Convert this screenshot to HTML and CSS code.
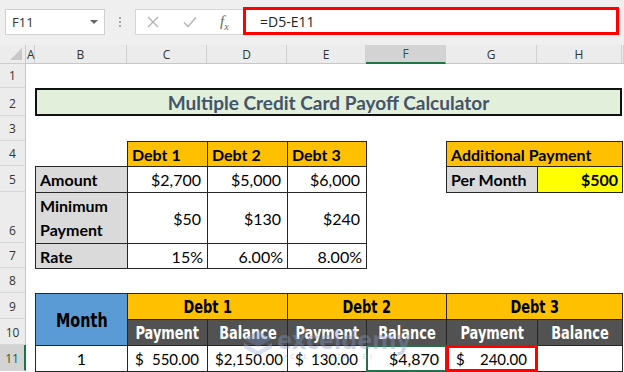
FILE: index.html
```html
<!DOCTYPE html>
<html lang="en">
<head>
    <meta charset="UTF-8">
    <title>Multiple Credit Card Payoff Calculator</title>
    <link rel="stylesheet" href="styles.css">
</head>
<body>
    <div class="toolbar">
        <div class="namebox">
            <span>F11</span>
            <span class="caret"></span>
        </div>
        <div class="grip"><i></i><i></i><i></i></div>
        <div class="formula-bar">
            <div class="fb-icons">
                <svg width="14" height="14" viewBox="0 0 14 14"><path d="M2 2 L12 12 M12 2 L2 12" stroke="#b3b3b3" stroke-width="1.4" fill="none"/></svg>
                <svg width="16" height="14" viewBox="0 0 16 14"><path d="M2 7.5 L6 11.5 L14 2.5" stroke="#b3b3b3" stroke-width="1.4" fill="none"/></svg>
                <span class="fx">f<sub>x</sub></span>
            </div>
            <div class="formula">=D5-E11</div>
        </div>
    </div>

    <div class="sheet">
        <!-- column headers -->
        <div class="corner r0 cR"><span></span></div>
        <div class="ch r0 cA">A</div>
        <div class="ch r0 cB">B</div>
        <div class="ch r0 cC">C</div>
        <div class="ch r0 cD">D</div>
        <div class="ch r0 cE">E</div>
        <div class="ch r0 cF active">F</div>
        <div class="ch r0 cG">G</div>
        <div class="ch r0 cH">H</div>
        <div class="ch r0 cX"></div>

        <!-- row headers -->
        <div class="rh r1 cR">1</div>
        <div class="rh r2 cR">2</div>
        <div class="rh r3 cR">3</div>
        <div class="rh r4 cR">4</div>
        <div class="rh r5 cR">5</div>
        <div class="rh r6 cR">6</div>
        <div class="rh r7 cR">7</div>
        <div class="rh r8 cR">8</div>
        <div class="rh r9 cR">9</div>
        <div class="rh r10 cR">10</div>
        <div class="rh r11 cR active">11</div>

        <!-- title -->
        <div class="title r2">Multiple Credit Card Payoff Calculator</div>

        <!-- debts -->
        <div class="c b orange bold r4 cC">Debt 1</div>
        <div class="c b orange bold r4 cD">Debt 2</div>
        <div class="c b orange bold r4 cE">Debt 3</div>

        <div class="c b grey bold r5 cB">Amount</div>
        <div class="c b num cur r5 cC">$2,700</div>
        <div class="c b num cur r5 cD">$5,000</div>
        <div class="c b num cur r5 cE">$6,000</div>

        <div class="c b grey bold wrap r6 cB">Minimum Payment</div>
        <div class="c b num cur r6 cC">$50</div>
        <div class="c b num cur r6 cD">$130</div>
        <div class="c b num cur r6 cE">$240</div>

        <div class="c b grey bold r7 cB">Rate</div>
        <div class="c b num r7 cC">15%</div>
        <div class="c b num r7 cD">6.00%</div>
        <div class="c b num r7 cE">8.00%</div>

        <!-- additional payment -->
        <div class="c b orange bold r4 cG span2">Additional Payment</div>
        <div class="c b grey bold r5 cG">Per Month</div>
        <div class="c b yellow bold num r5 cH">$500</div>

        <!-- schedule -->
        <div class="c b blue cond month cB"><span>Month</span></div>
        <div class="c b orange cond center r9 cC span2"><span>Debt 1</span></div>
        <div class="c b orange cond center r9 cE span2"><span>Debt 2</span></div>
        <div class="c b orange cond center r9 cG span2"><span>Debt 3</span></div>

        <div class="c b dark cond center r10 cC"><span>Payment</span></div>
        <div class="c b dark cond center r10 cD"><span>Balance</span></div>
        <div class="c b dark cond center r10 cE"><span>Payment</span></div>
        <div class="c b dark cond center r10 cF"><span>Balance</span></div>
        <div class="c b dark cond center r10 cG"><span>Payment</span></div>
        <div class="c b dark cond center r10 cH"><span>Balance</span></div>

        <div class="c b center r11 cB">1</div>
        <div class="c b acc r11 cC"><span>$</span><span>550.00</span></div>
        <div class="c b acc r11 cD"><span>$</span><span>2,150.00</span></div>
        <div class="c b acc r11 cE"><span>$</span><span>130.00</span></div>
        <div class="c b num cur selected r11 cF">$4,870</div>
        <div class="c b acc marked r11 cG"><span>$</span><span>240.00</span></div>
        <div class="c b r11 cH"></div>

        <div class="watermark">
            <svg width="30" height="28" viewBox="0 0 30 28"><path d="M15 1 L29 9 L15 17 L1 9 Z" fill="#6f86b8"/><path d="M1 13 L15 21 L29 13 L29 18 L15 26 L1 18 Z" fill="#9fb0d4"/></svg>
            <div class="wm-text">
                <span class="wm-name">exceldemy</span>
                <span class="wm-sub">EXCEL · DATA · BI</span>
            </div>
        </div>
    </div>
</body>
</html>
```

FILE: styles.css
```css
* {
    box-sizing: border-box;
}
body {
    margin: 0;
    width: 624px;
    height: 372px;
    overflow: hidden;
    background-color: #fff;
    font-family: Lato, "Open Sans", sans-serif;
    color: #000;
}

/* formula toolbar */
.toolbar {
    height: 45px;
    background-color: #efefef;
    display: flex;
    align-items: flex-start;
    padding: 9px 4px 0 5px;
    font-family: "Open Sans", sans-serif;
}
.namebox {
    width: 100px;
    height: 26px;
    background-color: #fff;
    border: 1px solid #cfcfcf;
    display: flex;
    align-items: center;
    justify-content: space-between;
    padding: 0 6px 0 6px;
    font-size: 13px;
    color: #333;
}
.caret {
    width: 0;
    height: 0;
    border-left: 4px solid transparent;
    border-right: 4px solid transparent;
    border-top: 4px solid #666;
}
.grip {
    width: 30px;
    height: 26px;
    display: flex;
    flex-direction: column;
    align-items: center;
    justify-content: center;
    gap: 2px;
}
.grip i {
    width: 2px;
    height: 2px;
    background-color: #a8a8a8;
}
.formula-bar {
    flex: 1;
    height: 26px;
    background-color: #fff;
    border: 1px solid #d6d6d6;
    display: flex;
}
.fb-icons {
    width: 107px;
    display: flex;
    align-items: center;
    gap: 22px;
    padding-left: 10px;
}
.fx {
    font-family: "Liberation Serif", serif;
    font-style: italic;
    font-size: 15px;
    color: #666;
}
.fx sub {
    font-size: 10px;
}
.formula {
    flex: 1;
    margin: -3px 0 -1px 0;
    border: 3px solid #f00;
    display: flex;
    align-items: center;
    padding-left: 14px;
    font-size: 14px;
    color: #222;
}

/* worksheet grid */
.sheet {
    position: relative;
    display: grid;
    grid-template-columns: 26px 9px 92px 80px 80px 79px 80px 91px 85px 2px;
    grid-template-rows: 19px 24px 28px 25px 25px 26px 51px 25px 25px 26px 26px 26px;
}
.r0 { grid-row: 1; }
.r1 { grid-row: 2; }
.r2 { grid-row: 3; }
.r3 { grid-row: 4; }
.r4 { grid-row: 5; }
.r5 { grid-row: 6; }
.r6 { grid-row: 7; }
.r7 { grid-row: 8; }
.r8 { grid-row: 9; }
.r9 { grid-row: 10; }
.r10 { grid-row: 11; }
.r11 { grid-row: 12; }
.cR { grid-column: 1; }
.cA { grid-column: 2; }
.cB { grid-column: 3; }
.cC { grid-column: 4; }
.cD { grid-column: 5; }
.cE { grid-column: 6; }
.cF { grid-column: 7; }
.cG { grid-column: 8; }
.cH { grid-column: 9; }
.cX { grid-column: 10; }
.span2 { grid-column-end: span 2; }

.corner {
    background-color: #ececec;
    border-right: 1px solid #cdcdcd;
    border-bottom: 1px solid #cdcdcd;
    position: relative;
}
.corner span {
    position: absolute;
    right: 3px;
    bottom: 3px;
    width: 0;
    height: 0;
    border-left: 12px solid transparent;
    border-bottom: 12px solid #c8c8c8;
}
.ch {
    background-color: #ececec;
    border-right: 1px solid #d0d0d0;
    border-bottom: 1px solid #c6c6c6;
    display: flex;
    align-items: center;
    justify-content: center;
    font-family: "Open Sans", sans-serif;
    font-size: 12px;
    color: #333;
}
.ch.cA {
    justify-content: flex-start;
    padding-left: 1px;
}
.ch.active {
    background-color: #d3d3d3;
    border-bottom: 2px solid #217346;
    color: #1e5c3a;
}
.rh {
    background-color: #ececec;
    border-right: 1px solid #c6c6c6;
    border-bottom: 1px solid #d6d6d6;
    display: flex;
    align-items: flex-end;
    justify-content: center;
    padding-bottom: 3px;
    font-family: "Open Sans", sans-serif;
    font-size: 12px;
    color: #333;
}
.rh.active {
    background-color: #d3d3d3;
    border-right: 2px solid #217346;
    color: #1e5c3a;
}

.title {
    grid-column: 3 / 10;
    border: 2px solid #111;
    background-color: #e2efda;
    color: #44546a;
    font-weight: bold;
    font-size: 19px;
    display: flex;
    align-items: center;
    justify-content: center;
}

/* cells */
.c {
    display: flex;
    align-items: center;
    padding: 0 4px;
    font-size: 16px;
    white-space: nowrap;
    background-color: #fff;
}
.b {
    border: 1px solid #262626;
    margin: 0 -1px -1px 0;
}
.bold { font-weight: bold; }
.num { justify-content: flex-end; }
.cur { padding-right: 6px; }
.center { justify-content: center; }
.wrap {
    white-space: normal;
    line-height: 24px;
}
.orange { background-color: #ffc000; }
.grey { background-color: #dadada; }
.yellow { background-color: #ffff00; }
.blue { background-color: #5b9bd5; }
.dark { background-color: #525252; color: #fff; }
.cond {
    font-family: "DejaVu Sans", sans-serif;
    font-weight: bold;
    font-size: 18px;
}
.cond span {
    display: inline-block;
    transform: scaleX(0.72);
}
.month {
    grid-row: 10 / 12;
    justify-content: center;
    font-size: 20px;
}
.acc {
    justify-content: space-between;
    padding: 0 8px 0 7px;
    font-size: 15px;
}
.selected {
    border: 2px solid #217346;
}
.marked {
    border: 3px solid #f00;
    z-index: 2;
}

.watermark {
    position: absolute;
    left: 243px;
    top: 282px;
    display: flex;
    align-items: center;
    gap: 4px;
    opacity: 0.4;
    pointer-events: none;
    z-index: 3;
}
.wm-text {
    display: flex;
    flex-direction: column;
    line-height: 1;
}
.wm-name {
    font-family: "Open Sans", sans-serif;
    font-weight: bold;
    font-size: 25px;
    color: #7f93c0;
}
.wm-sub {
    font-family: "Open Sans", sans-serif;
    font-size: 8px;
    letter-spacing: 2px;
    color: #8a9cc4;
}
```
